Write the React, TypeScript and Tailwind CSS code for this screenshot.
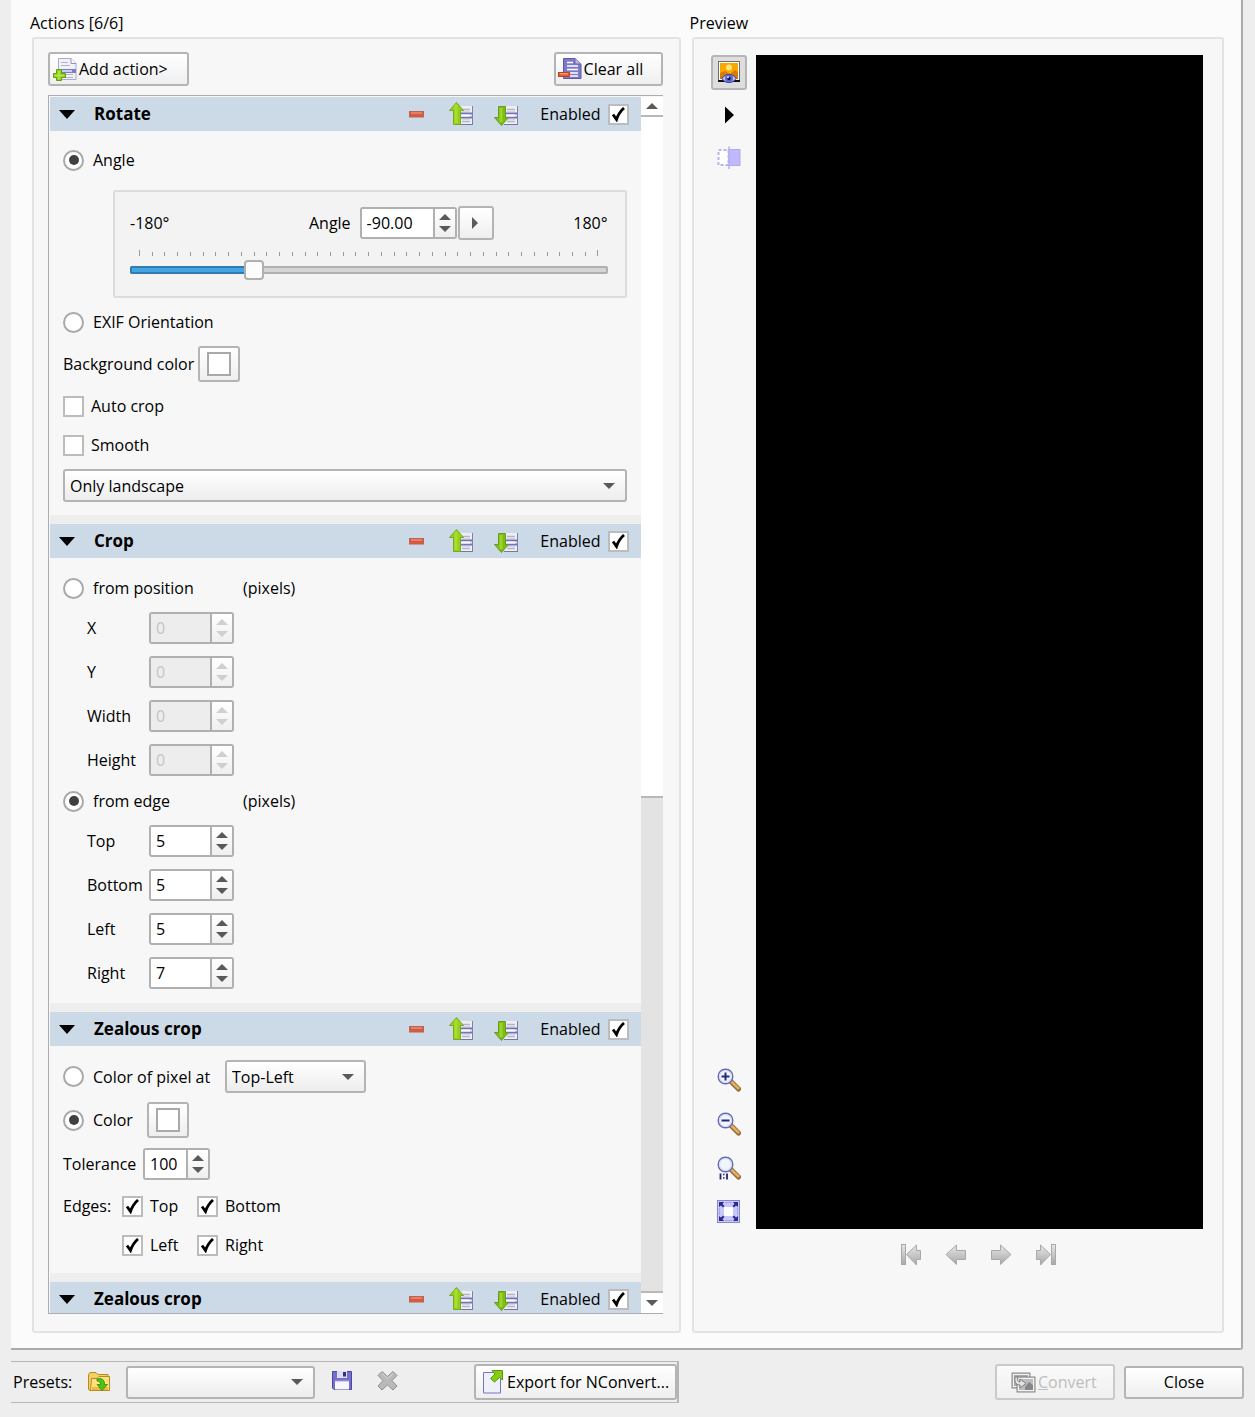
import React, { useId, useState } from "react";

const BUTTON =
  "flex items-center rounded-[3px] border-2 border-[#b4b4b4] bg-linear-to-b from-white to-[#efefef]";

function Tri({ dir, color = "#5a5a5a" }: { dir: "up" | "down" | "right"; color?: string }) {
  if (dir === "right")
    return (
      <svg width="8" height="12" viewBox="0 0 8 12" aria-hidden="true">
        <path d="M0 0L6 6L0 12Z" fill={color} />
      </svg>
    );
  return (
    <svg width="12" height="6" viewBox="0 0 12 6" aria-hidden="true">
      <path d={dir === "up" ? "M0 6L6 0L12 6Z" : "M0 0L6 6L12 0Z"} fill={color} />
    </svg>
  );
}

function SheetLines() {
  return (
    <>
      <rect x="9" y="4" width="14" height="18" fill="#eeeff5" />
      <path d="M13 7.500H21M13 19.500H21" stroke="#b3b6c0" strokeWidth="1.500" />
      <path d="M13 9.500H21M13 17.500H21" stroke="#d4d6df" />
      <path d="M11 11.500H23M11 15.500H23" stroke="#7573b8" strokeWidth="2" />
      <rect x="12" y="12.500" width="9" height="2" fill="#fff" />
      <path d="M23.500 4V22.500" stroke="#7f7fae" />
      <path d="M10 22.500H24" stroke="#77779c" />
    </>
  );
}

function UpIcon() {
  return (
    <svg width="25" height="24" viewBox="0 0 25 24" aria-hidden="true">
      <SheetLines />
      <path d="M7.500 0.500L14.500 8.500H11.500V22.500H4.500V8.500H0.500Z" fill="#93cf1b" stroke="#78ab20" />
      <path d="M7 2.500V21" stroke="#a9dd30" strokeWidth="3" />
    </svg>
  );
}

function DownIcon() {
  return (
    <svg width="25" height="24" viewBox="0 0 25 24" aria-hidden="true">
      <SheetLines />
      <path d="M4.500 4.500H11.500V15.500H14.500L7.500 23.500L0.500 15.500H4.500Z" fill="#7cbd12" stroke="#68982a" />
      <path d="M7 6V20" stroke="#9cd428" strokeWidth="3" />
    </svg>
  );
}

function MinusIcon() {
  return (
    <svg width="16" height="7" viewBox="0 0 16 7" aria-hidden="true">
      <rect x="0.500" y="0.500" width="14" height="5.500" fill="#dc5a3c" stroke="#b5655a" />
      <path d="M2 2H13" stroke="#f3a48e" />
    </svg>
  );
}

function AddPageIcon() {
  return (
    <svg width="24" height="24" viewBox="0 0 24 24" aria-hidden="true">
      <path d="M5.500 1.500H18L23 6.500V22.500H5.500Z" fill="#f1f1fa" stroke="#a9a9cc" />
      <path d="M18 1.500V6.500H23" fill="#fff" stroke="#9191bb" />
      <path d="M8 5.500H15M8 8.500H17M10 17.500H20M10 20.500H20" stroke="#b2b4cc" />
      <path d="M6 12H23V16H6Z" fill="#7f7cc2" />
      <path d="M8 14H19" stroke="#e9e9ff" strokeWidth="1.500" />
      <path d="M3.500 12.500H8.500V16.500H12.500V20.500H8.500V23.500H3.500V20.500H0.500V16.500H3.500Z" fill="#93d41a" stroke="#5f9d12" />
      <path d="M6 14V22M2 18.500H11" stroke="#b6e645" strokeWidth="1.500" />
    </svg>
  );
}

function ClearPageIcon() {
  return (
    <svg width="24" height="24" viewBox="0 0 24 24" aria-hidden="true">
      <path d="M5.500 1.500H17L23 7V21.500H5.500Z" fill="#7d7acb" stroke="#5d5ba8" />
      <path d="M17 1.500V7H23" fill="#b9b7ea" stroke="#6664b2" />
      <path d="M9 5.500H15M9 9H20M9 12.500H20M11 16H20M12 19H20" stroke="#fff" strokeWidth="1.600" />
      <rect x="0.500" y="15.500" width="11" height="4" fill="#e85a2c" stroke="#b4462a" />
      <path d="M2 16.800H10" stroke="#ffb08e" />
    </svg>
  );
}

function PreviewIcon() {
  return (
    <svg width="24" height="24" viewBox="0 0 24 24" aria-hidden="true">
      <rect x="1.500" y="0.500" width="21" height="19" fill="#fff" stroke="#6b6b70" />
      <path d="M1 20H23" stroke="#111" strokeWidth="2" />
      <rect x="3" y="2" width="18" height="16" fill="#f7a800" />
      <circle cx="12" cy="6.500" r="3" fill="#ffe37a" />
      <path d="M3 12L8 10L13 13L18 9L21 11V18H3Z" fill="#dc7a08" />
      <path d="M5 17.500C8 12 16 12 19 17.500C16 23 8 23 5 17.500Z" fill="#c2c6f6" stroke="#34398f" />
      <circle cx="12" cy="17.500" r="4" fill="#5f6ad0" />
      <circle cx="12" cy="17.500" r="1.700" fill="#0f1550" />
      <circle cx="11" cy="16.200" r="0.900" fill="#fff" />
    </svg>
  );
}

function CompareIcon() {
  return (
    <svg width="24" height="24" viewBox="0 0 24 24" aria-hidden="true">
      <rect x="1.500" y="4" width="10" height="15" fill="#fff" stroke="#b9b4e6" strokeWidth="2" strokeDasharray="3 2" />
      <rect x="12" y="3.500" width="11" height="16" fill="#bfbaff" stroke="#b0abea" />
      <path d="M12 0.500V23" stroke="#b4aff0" strokeWidth="1.500" />
    </svg>
  );
}

function Magnifier({ mark }: { mark: "plus" | "minus" | "one" }) {
  return (
    <svg width="24" height="24" viewBox="0 0 24 24" aria-hidden="true">
      <path d="M14.500 14L21.500 21" stroke="#8d6a3b" strokeWidth="5" strokeLinecap="round" />
      <path d="M14.500 13.700L21.300 20.300" stroke="#e3ac5d" strokeWidth="2.800" strokeLinecap="round" />
      <circle cx="8.500" cy="8.500" r="7.300" fill="#f0f6fe" stroke="#6866b5" strokeWidth="1.400" />
      <circle cx="8.500" cy="8.500" r="6" fill="none" stroke="#ccd6f6" />
      {mark !== "one" && <path d="M4.500 8.500H12.500" stroke="#29297d" strokeWidth="2" />}
      {mark === "plus" && <path d="M8.500 4.500V12.500" stroke="#29297d" strokeWidth="2" />}
      {mark === "one" && (
        <>
          <path d="M2 17H11V24H2Z" fill="#f7f7f7" />
          <path d="M3.500 17.500V23.500M10 17.500V23.500" stroke="#23235f" strokeWidth="1.800" />
          <path d="M6 18.500H7.500M6 22H7.500" stroke="#23235f" strokeWidth="1.600" />
        </>
      )}
    </svg>
  );
}

function FitIcon() {
  return (
    <svg width="24" height="24" viewBox="0 0 24 24" aria-hidden="true">
      <rect x="0.500" y="0.500" width="22" height="22" fill="#c9c8fb" stroke="#8886cf" />
      <path d="M8 2.500H15M8 20.500H15M2.500 8V15M20.500 8V15" fill="none" stroke="#a8a6ea" />
      <rect x="7" y="7" width="9" height="9" fill="#fff" />
      <path d="M2 2H7L5.500 4L7.500 6L6 7.500L4 5.500L2 7ZM21 2V7L19 5.500L17 7.500L15.500 6L17.500 4L16 2ZM2 21V16L4 17.500L6 15.500L7.500 17L5.500 19L7 21ZM21 21H16L17.500 19L15.500 17L17 15.500L19 17.500L21 16Z" fill="#2c2a8c" />
    </svg>
  );
}

function NavIcon({ kind }: { kind: "first" | "prev" | "next" | "last" }) {
  const id = useId();
  const flip = kind === "next" || kind === "last";
  const end = kind === "first" || kind === "last";
  return (
    <svg width="22" height="22" viewBox="0 0 22 22" aria-hidden="true">
      <defs>
        <linearGradient id={id} x1="0" y1="0" x2="0" y2="1">
          <stop offset="0" stopColor="#e6e6e6" />
          <stop offset="1" stopColor="#a9a9a9" />
        </linearGradient>
      </defs>
      <g transform={flip ? "matrix(-1 0 0 1 22 0)" : undefined} fill={`url(#${id})`} stroke="#a8a8a8">
        {end ? (
          <>
            <rect x="1.500" y="0.500" width="4" height="20" />
            <path d="M6.500 10.500L16.500 1V6.500H20.500V15.500H16.500V21Z" />
          </>
        ) : (
          <path d="M1 10.500L11.500 1V6.500H20.500V15.500H11.500V20.500Z" />
        )}
      </g>
    </svg>
  );
}

function FolderIcon() {
  return (
    <svg width="24" height="22" viewBox="0 0 24 22" aria-hidden="true">
      <path d="M1.500 3.500L3 1.500H9L11 3.500H21V19.500H2.500L1.500 18Z" fill="#f3cf66" stroke="#b58a24" />
      <path d="M4.500 7.500L10 7.500L12 5.500H22.500V19.500H3.500Z" fill="#ffe27e" stroke="#b58a24" />
      <path d="M5 16H21V19H5Z" fill="#f1b93c" />
      <path d="M10 8C14 6.500 18 8.500 17.500 13.500H20.500L15 19.500L10 13.500H13.500C13.500 11.500 12.500 10 10 10Z" fill="#4cc414" stroke="#2f8b12" strokeWidth="0.800" />
    </svg>
  );
}

function SaveIcon() {
  return (
    <svg width="22" height="22" viewBox="0 0 22 22" aria-hidden="true">
      <path d="M1.500 0.500H20.500V18.500H3L1.500 17Z" fill="#7470cc" stroke="#4a47a2" />
      <rect x="6" y="0" width="10" height="7" fill="#dedef2" />
      <rect x="12" y="1" width="3" height="4.500" fill="#33317e" />
      <rect x="4" y="10" width="14" height="8.500" fill="#f6f6ff" />
      <path d="M4 10H18" stroke="#a9a6e4" />
    </svg>
  );
}

function DeleteIcon() {
  return (
    <svg width="21" height="22" viewBox="0 0 21 22" aria-hidden="true">
      <path
        d="M5 0.500L10.500 5.500L16 0.500L20 4.500L15 9.500L20 15L16 19L10.500 14L5 19L1 15L6 9.500L1 4.500Z"
        fill="#b9b9b9"
        stroke="#8f8f8f"
        strokeLinejoin="round"
      />
      <path d="M5 2.500L10.500 7.500L16 2.500" stroke="#dadada" fill="none" />
    </svg>
  );
}

function ExportIcon() {
  return (
    <svg width="22" height="24" viewBox="0 0 22 24" aria-hidden="true">
      <path d="M1.500 2.500H18.500V23H1.500Z" fill="#eef0fb" stroke="#7776bd" />
      <path d="M10 0.500H20.500V10L17.500 7.500L12.500 12L8.500 8.500L13 4Z" fill="#86cc10" stroke="#559a10" />
    </svg>
  );
}

function ConvertIcon() {
  return (
    <svg width="25" height="21" viewBox="0 0 25 21" aria-hidden="true">
      <rect x="1" y="1" width="18" height="15" fill="#bdbdbd" stroke="#8b8b8b" />
      <rect x="2.500" y="2.500" width="15" height="12" fill="#a8a8a8" stroke="#f4f4f4" />
      <rect x="6" y="5" width="18" height="15" fill="#d2d2d2" stroke="#858585" />
      <rect x="7.500" y="6.500" width="15" height="12" fill="#bcbcbc" stroke="#f4f4f4" />
      <path d="M14 18V15L18 10L22 13V18Z" fill="#868686" />
      <path d="M4 5C3 11 6 13 9 13V16L15 11.500L9 7V10C7 10 6 8 7 5Z" fill="#e3e3e3" stroke="#7c7c7c" />
    </svg>
  );
}

function Check({ label, checked = false, before = false }: { label: string; checked?: boolean; before?: boolean }) {
  const text = <span>{label}</span>;
  return (
    <label className="flex items-center gap-[7px]">
      {before && text}
      <span className="grid size-[21px] shrink-0 place-items-center">
        <input
          type="checkbox"
          defaultChecked={checked}
          className="peer size-[21px] appearance-none border-2 border-[#bcbcbc] bg-white [grid-area:1/1]"
        />
        <svg width="15" height="15" viewBox="0 0 15 15" aria-hidden="true" className="pointer-events-none hidden [grid-area:1/1] peer-checked:block">
          <path d="M2 7.500L5.500 12.500C7 8 9.500 4 13 1" fill="none" stroke="#000" strokeWidth="2.800" />
        </svg>
      </span>
      {!before && text}
    </label>
  );
}

function Radio({ label, name, checked = false }: { label: string; name: string; checked?: boolean }) {
  return (
    <label className="flex h-6 items-center gap-[9px]">
      <span className="grid size-[21px] shrink-0 place-items-center">
        <input
          type="radio"
          name={name}
          defaultChecked={checked}
          className="peer size-[21px] appearance-none rounded-full border-2 border-[#a9a9a9] bg-white [grid-area:1/1]"
        />
        <span className="pointer-events-none hidden size-[10px] rounded-full bg-[#404040] [grid-area:1/1] peer-checked:block" />
      </span>
      <span>{label}</span>
    </label>
  );
}

function Spin({ id, value, width, disabled = false }: { id: string; value: string; width: string; disabled?: boolean }) {
  const [text, setText] = useState(value);
  const decimals = (value.split(".")[1] || "").length;
  const step = (d: number) => setText((Number(text) + d).toFixed(decimals));
  const color = disabled ? "#cfcfcf" : "#5a5a5a";
  return (
    <span className={`flex h-8 shrink-0 overflow-hidden rounded-[3px] border-2 border-[#b0b0b0] ${width}`}>
      <input
        id={id}
        type="text"
        inputMode="decimal"
        value={text}
        disabled={disabled}
        onChange={(e) => setText(e.target.value)}
        className="min-w-0 flex-1 bg-white pl-[5px] disabled:bg-[#ededed] disabled:text-[#c4c4c4]"
      />
      <span className="flex w-[22px] shrink-0 flex-col border-l-2 border-[#b0b0b0] bg-linear-to-b from-white to-[#efefef]">
        <button type="button" aria-label="Increase" disabled={disabled} onClick={() => step(1)} className="flex flex-1 items-end justify-center pb-[3px]">
          <Tri dir="up" color={color} />
        </button>
        <button type="button" aria-label="Decrease" disabled={disabled} onClick={() => step(-1)} className="flex flex-1 items-start justify-center pt-[3px]">
          <Tri dir="down" color={color} />
        </button>
      </span>
    </span>
  );
}

function Combo({ label, options, width }: { label: string; options: string[]; width: string }) {
  return (
    <span className={`grid items-center ${width}`}>
      <select
        aria-label={label}
        className="h-[33px] w-full appearance-none rounded-[3px] border-2 border-[#b4b4b4] bg-linear-to-b from-white to-[#ededed] pr-7 pl-[5px] [grid-area:1/1]"
      >
        {options.map((o) => (
          <option key={o}>{o}</option>
        ))}
      </select>
      <span className="pointer-events-none mr-3 justify-self-end [grid-area:1/1]">
        <Tri dir="down" />
      </span>
    </span>
  );
}

function Swatch({ label }: { label: string }) {
  return (
    <button type="button" aria-label={label} className={`${BUTTON} h-9 w-[42px] justify-center`}>
      <span className="size-6 border-2 border-[#a9a9a9] bg-white" />
    </button>
  );
}

function SectionHeader({ title }: { title: string }) {
  return (
    <div className="flex h-[34px] items-center bg-[#ccd9e6] pr-3 pl-2">
      <button type="button" aria-label={`Collapse ${title}`} className="flex w-9 items-center">
        <svg width="18" height="9" viewBox="0 0 18 9" aria-hidden="true">
          <path d="M1 0H17L9 9Z" fill="#000" />
        </svg>
      </button>
      <h2 className="flex-1 text-[17px] font-bold">{title}</h2>
      <button type="button" aria-label="Remove" className="mr-6">
        <MinusIcon />
      </button>
      <button type="button" aria-label="Move up" className="mr-5">
        <UpIcon />
      </button>
      <button type="button" aria-label="Move down" className="mr-[21px]">
        <DownIcon />
      </button>
      <Check label="Enabled" checked before />
    </div>
  );
}

function FieldRows({ rows, disabled = false, prefix }: { rows: [string, string][]; disabled?: boolean; prefix: string }) {
  return (
    <div className="mt-3 flex flex-col gap-3 pl-6">
      {rows.map(([label, value]) => (
        <div key={label} className="flex items-center">
          <label htmlFor={prefix + label} className="w-[62px]">
            {label}
          </label>
          <Spin id={prefix + label} value={value} width="w-[85px]" disabled={disabled} />
        </div>
      ))}
    </div>
  );
}

function AngleSlider() {
  const [angle, setAngle] = useState(-90);
  return (
    <div className="mt-[18px] ml-[50px] rounded-xs border-2 border-[#dcdcdc] bg-[#f3f3f3] pt-3.5 pr-[17px] pb-4 pl-[15px]">
      <div className="flex items-center justify-between">
        <span className="w-[101px]">-180°</span>
        <div className="flex items-center">
          <label htmlFor="angle" className="mr-[9px]">
            Angle
          </label>
          <Spin id="angle" value="-90.00" width="w-[97px]" />
          <button type="button" aria-label="Angle presets" className={`${BUTTON} ml-px h-[34px] w-9 justify-center`}>
            <Tri dir="right" />
          </button>
        </div>
        <span className="w-9 text-right">180°</span>
      </div>
      <div className="mt-2.5 flex h-1.5 items-end justify-between px-[9px]" aria-hidden="true">
        {Array.from({ length: 37 }, (_, i) => (
          <span key={i} className={i % 36 === 0 ? "h-1.5 w-px bg-[#999]" : "h-1 w-px bg-[#999]"} />
        ))}
      </div>
      <div className="mt-1 grid items-center">
        <div className="h-2 overflow-hidden rounded-xs border-2 border-[#b0b0b0] bg-[#d4d4d4] [grid-area:1/1]" />
        <div
          className="h-2 rounded-xs border-2 border-[#2f7db3] bg-[#45a5e2] [grid-area:1/1]"
          style={{ width: `${((angle + 180) / 360) * 100}%` }}
        />
        <input
          type="range"
          aria-label="Rotation angle"
          min={-180}
          max={180}
          value={angle}
          onChange={(e) => setAngle(Number(e.target.value))}
          className="h-5 w-full appearance-none bg-transparent [grid-area:1/1] [&::-webkit-slider-thumb]:size-5 [&::-webkit-slider-thumb]:appearance-none [&::-webkit-slider-thumb]:rounded-[4px] [&::-webkit-slider-thumb]:border-2 [&::-webkit-slider-thumb]:border-[#b0b0b0] [&::-webkit-slider-thumb]:bg-[#fcfcfc]"
        />
      </div>
    </div>
  );
}

function ActionList() {
  return (
    <div className="mt-[9px] flex border-t border-b border-l border-[#adadad] pt-px pl-px">
      <div className="min-w-0 flex-1 bg-[#eeeeee]">
        <section>
          <SectionHeader title="Rotate" />
          <div className="bg-[#f7f7f7] pt-[17px] pr-3.5 pb-[13px] pl-[13px]">
            <Radio name="rotate" label="Angle" checked />
            <AngleSlider />
            <div className="mt-3">
              <Radio name="rotate" label="EXIF Orientation" />
            </div>
            <div className="mt-3 flex items-center gap-1">
              <span>Background color</span>
              <Swatch label="Background color" />
            </div>
            <div className="mt-3 flex h-6 items-center">
              <Check label="Auto crop" />
            </div>
            <div className="mt-[15px] flex h-6 items-center">
              <Check label="Smooth" />
            </div>
            <div className="mt-3">
              <Combo label="Orientation filter" options={["Only landscape", "Only portrait"]} width="w-full" />
            </div>
          </div>
        </section>
        <section className="mt-[9px]">
          <SectionHeader title="Crop" />
          <div className="bg-[#f7f7f7] pt-[18px] pr-3.5 pb-3.5 pl-[13px]">
            <div className="grid grid-cols-[180px_1fr] items-center">
              <Radio name="crop" label="from position" />
              <span>(pixels)</span>
            </div>
            <FieldRows prefix="position-" disabled rows={[["X", "0"], ["Y", "0"], ["Width", "0"], ["Height", "0"]]} />
            <div className="mt-[13px] grid grid-cols-[180px_1fr] items-center">
              <Radio name="crop" label="from edge" checked />
              <span>(pixels)</span>
            </div>
            <FieldRows prefix="edge-" rows={[["Top", "5"], ["Bottom", "5"], ["Left", "5"], ["Right", "7"]]} />
          </div>
        </section>
        <section className="mt-[9px]">
          <SectionHeader title="Zealous crop" />
          <div className="bg-[#f7f7f7] pt-3.5 pr-3.5 pb-4 pl-[13px]">
            <div className="grid grid-cols-[162px_1fr] items-center">
              <Radio name="zealous" label="Color of pixel at" />
              <Combo label="Pixel position" options={["Top-Left", "Bottom-Right"]} width="w-[141px]" />
            </div>
            <div className="mt-[9px] grid grid-cols-[84px_1fr] items-center">
              <Radio name="zealous" label="Color" checked />
              <Swatch label="Crop color" />
            </div>
            <div className="mt-2.5 flex items-center">
              <label htmlFor="tolerance" className="w-20">
                Tolerance
              </label>
              <Spin id="tolerance" value="100" width="w-[67px]" />
            </div>
            <div className="mt-3.5 grid grid-cols-[59px_75px_1fr] items-center gap-y-[15px]">
              <span>Edges:</span>
              <div className="flex h-6 items-center"><Check label="Top" checked /></div>
              <div className="flex h-6 items-center"><Check label="Bottom" checked /></div>
              <div className="col-start-2 flex h-6 items-center"><Check label="Left" checked /></div>
              <div className="flex h-6 items-center"><Check label="Right" checked /></div>
            </div>
          </div>
        </section>
        <section className="mt-[9px] h-[31px] overflow-hidden">
          <SectionHeader title="Zealous crop" />
        </section>
      </div>
      <div className="flex w-[22px] shrink-0 flex-col bg-white">
        <button type="button" aria-label="Scroll up" className="flex h-5 items-center justify-center border-b-2 border-[#b8b8b8]">
          <Tri dir="up" />
        </button>
        <div className="flex-[680] bg-white" />
        <div className="flex-[494] border-t-2 border-b-2 border-[#b8b8b8] bg-[#e3e3e3]" />
        <button type="button" aria-label="Scroll down" className="flex h-5 items-center justify-center">
          <Tri dir="down" />
        </button>
      </div>
    </div>
  );
}

function PreviewPane() {
  return (
    <div className="flex flex-1 flex-col rounded-[3px] border-2 border-[#e3e3e3] bg-[#f7f7f7] pt-4 pr-[19px] pb-[65px] pl-[17px]">
      <div className="flex flex-1 gap-[9px]">
        <div className="flex w-9 shrink-0 flex-col items-center">
          <button type="button" aria-label="Show preview" aria-pressed="true" className="flex h-[35px] w-9 items-center justify-center rounded-[3px] border-2 border-[#b5b5b5] bg-[#dedede]">
            <PreviewIcon />
          </button>
          <button type="button" aria-label="Play" className="mt-4">
            <svg width="10" height="18" viewBox="0 0 10 18" aria-hidden="true">
              <path d="M1 0.500L10 9L1 17.500Z" fill="#000" />
            </svg>
          </button>
          <button type="button" aria-label="Compare" className="mt-[22px] mb-auto">
            <CompareIcon />
          </button>
          <div className="flex flex-col gap-5 pb-[5px]">
            <button type="button" aria-label="Zoom in"><Magnifier mark="plus" /></button>
            <button type="button" aria-label="Zoom out"><Magnifier mark="minus" /></button>
            <button type="button" aria-label="Actual size"><Magnifier mark="one" /></button>
            <button type="button" aria-label="Fit to window"><FitIcon /></button>
          </div>
        </div>
        <div className="flex-1 bg-black" />
      </div>
      <div className="mt-[15px] flex justify-center gap-[23px] pl-[43px]">
        {(["first", "prev", "next", "last"] as const).map((k) => (
          <button key={k} type="button" aria-label={k} disabled>
            <NavIcon kind={k} />
          </button>
        ))}
      </div>
    </div>
  );
}

export default function App() {
  return (
    <div className="flex min-h-screen flex-col bg-[#eeeeee] pb-3.5 pl-[11px] font-['Open_Sans',sans-serif] text-base leading-6 text-black [&_button]:cursor-default">
      <main className="mr-3 grid flex-1 grid-cols-[minmax(0,648fr)_minmax(0,532fr)] gap-[11px] rounded-br-[3px] border-r-2 border-b-2 border-[#ababab] bg-[#fbfbfb] pt-[11px] pr-[17px] pb-[15px] pl-[21px]">
        <div className="flex flex-col">
          <h1 className="-ml-0.5 mb-0.5">Actions [6/6]</h1>
          <div className="flex-1 rounded-[3px] border-2 border-[#e3e3e3] bg-[#f7f7f7] pt-[13px] pr-4 pb-4 pl-3.5">
            <div className="flex justify-between">
              <button type="button" className={`${BUTTON} h-[34px] w-[141px] gap-0.5 pl-[3px]`}>
                <AddPageIcon />
                Add action&gt;
              </button>
              <button type="button" className={`${BUTTON} h-[34px] w-[109px] gap-0.5 pl-0.5`}>
                <ClearPageIcon />
                Clear all
              </button>
            </div>
            <ActionList />
          </div>
        </div>
        <div className="flex flex-col">
          <h1 className="-ml-0.5 mb-0.5">Preview</h1>
          <PreviewPane />
        </div>
      </main>
      <footer className="mt-[11px] mr-[11px] flex items-center justify-between">
        <div className="flex h-[42px] items-center border-t border-r-2 border-b border-[#b5b5b5] pl-0.5">
          <span className="w-[74px]">Presets:</span>
          <button type="button" aria-label="Open preset" className="mr-[15px]">
            <FolderIcon />
          </button>
          <Combo label="Preset" options={[""]} width="w-[189px]" />
          <button type="button" aria-label="Save preset" className="ml-4">
            <SaveIcon />
          </button>
          <button type="button" aria-label="Delete preset" disabled className="ml-6">
            <DeleteIcon />
          </button>
          <button type="button" className={`${BUTTON} ml-[76px] h-9 w-[203px] gap-[3px] pl-1.5`}>
            <ExportIcon />
            Export for NConvert...
          </button>
        </div>
        <div className="flex items-center gap-[9px]">
          <button type="button" disabled className="flex h-9 w-[120px] items-center gap-0.5 rounded-[3px] border-2 border-[#cacaca] bg-linear-to-b from-[#fafafa] to-[#f0f0f0] pl-3.5 text-[#bdbdbd]">
            <ConvertIcon />
            <span><u>C</u>onvert</span>
          </button>
          <button type="button" className={`${BUTTON} h-[33px] w-[120px] justify-center`}>
            Close
          </button>
        </div>
      </footer>
    </div>
  );
}
